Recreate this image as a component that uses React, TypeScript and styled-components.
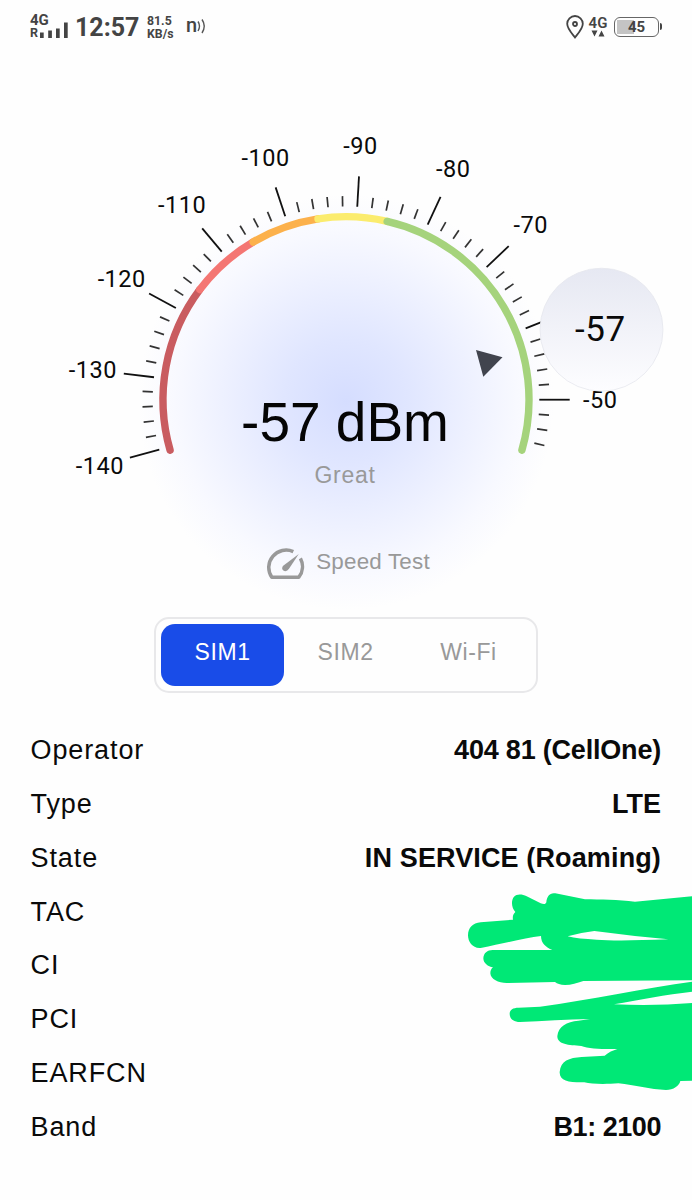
import React from "react";
import styled, { createGlobalStyle } from "styled-components";

const GlobalStyle = createGlobalStyle`
  *, *::before, *::after { box-sizing: border-box; }
  body {
    margin: 0;
    background: #fefefe;
    font-family: "Liberation Sans", Arial, sans-serif;
    color: #0a0a0a;
  }
`;

const Screen = styled.main`
  width: 692px;
  height: 1200px;
  display: flex;
  flex-direction: column;
  overflow: hidden;
  background: #fefefe;
`;

/* ---------- status bar ---------- */

const StatusBar = styled.header`
  height: 52px;
  flex: none;
  padding: 0 33px 0 30px;
  display: flex;
  justify-content: space-between;
  align-items: flex-start;
  font-family: Roboto, "Liberation Sans", sans-serif;
  color: #444;
`;

const StatusGroup = styled.div`
  display: flex;
  align-items: flex-start;
`;

const Network = styled.div`
  width: 40px;
  padding-top: 13px;
  font-size: 15px;
  font-weight: 700;
  line-height: 14px;
`;

const Roaming = styled.div`
  display: flex;
  align-items: flex-end;
  height: 12px;
  gap: 2px;
  font-size: 12.5px;
  line-height: 12px;
`;

const Bars = styled.svg`
  width: 30px;
  height: 17px;
  flex: none;
  margin-bottom: 1.5px;
`;

const Clock = styled.div`
  margin: 13px 0 0 5px;
  width: 64px;
  font-size: 25px;
  line-height: 30px;
  font-weight: 700;
  white-space: nowrap;
`;

const Rate = styled.div`
  margin: 15px 0 0 8px;
  width: 38px;
  font-size: 12.3px;
  font-weight: 700;
  line-height: 12.5px;
  white-space: nowrap;
`;

const Nfc = styled.div`
  display: flex;
  margin: 14px 0 0 1px;
  font-size: 20px;
  line-height: 22px;
  font-weight: 500;
`;

const DataIndicator = styled.div`
  margin: 16px 0 0 4px;
  width: 20px;
  display: flex;
  flex-direction: column;
  align-items: center;
  font-size: 15px;
  line-height: 14px;
  font-weight: 600;
`;

const Battery = styled.div`
  position: relative;
  margin: 17px 0 0 6px;
  width: 45px;
  height: 20px;
  border: 1.5px solid #666;
  border-radius: 6px;
  display: flex;
  align-items: center;
  justify-content: center;
  font-size: 15px;
  font-weight: 700;
  background: linear-gradient(90deg, #c4c4c4 0 17px, transparent 17px) 2px 2px / 40px 14px no-repeat;

  &::after {
    content: "";
    position: absolute;
    right: -4px;
    top: 5px;
    width: 2px;
    height: 7px;
    border-radius: 0 2px 2px 0;
    background: #444;
  }
`;

/* ---------- gauge ---------- */

const GaugeStage = styled.section`
  display: grid;
  height: 564.5px;
  flex: none;
`;

const Dial = styled.svg`
  grid-area: 1 / 1;
  width: 692px;
  height: 564px;
`;

const Readout = styled.div`
  grid-area: 1 / 1;
  z-index: 1;
  display: flex;
  flex-direction: column;
  align-items: center;
  padding-top: 339px;
`;

const Level = styled.div`
  font-size: 55px;
  line-height: 62px;
  color: #050505;
  white-space: nowrap;
  padding-right: 2px;
`;

const Quality = styled.div`
  margin-top: 9px;
  font-size: 23px;
  line-height: 26px;
  letter-spacing: 0.7px;
  color: #999;
  padding-right: 2px;
`;

const SpeedTest = styled.button`
  display: flex;
  align-items: center;
  gap: 11px;
  margin: 55px 0 0 4px;
  padding: 0;
  border: 0;
  background: none;
  font: 22.4px/28px "Liberation Sans", Arial, sans-serif;
  letter-spacing: 0.2px;
  color: #999;

  svg {
    margin-top: 5px;
  }
`;

/* ---------- tabs ---------- */

const Tabs = styled.nav`
  width: 384px;
  height: 76px;
  flex: none;
  align-self: center;
  display: flex;
  padding: 5px;
  border: 2px solid #e8e8ea;
  border-radius: 15px;
`;

const Tab = styled.button<{ $active?: boolean }>`
  width: 123px;
  height: 62px;
  flex: none;
  border: 0;
  border-radius: 14px;
  padding: 0 0 4px;
  background: ${(p) => (p.$active ? "#194ce8" : "transparent")};
  color: ${(p) => (p.$active ? "#fff" : "#999")};
  font: 23px "Liberation Sans", Arial, sans-serif;
  letter-spacing: 0.6px;
`;

/* ---------- details ---------- */

const Details = styled.section`
  position: relative;
  margin-top: 31px;
  padding: 0 31px 0 30.5px;
`;

const Row = styled.div`
  display: flex;
  justify-content: space-between;
  align-items: center;
  height: 53.86px;
`;

const Label = styled.span`
  font-size: 27px;
  letter-spacing: 0.9px;
`;

const Value = styled.span<{ $tracking: number }>`
  font-size: 27px;
  font-weight: 700;
  letter-spacing: ${(p) => p.$tracking}px;
`;

const Redaction = styled.svg`
  position: absolute;
  right: 0;
  top: 156.5px;
  width: 242px;
  height: 220px;
`;

const CX = 346;
const CY = 399.7;
const RADIUS = 183;

/* Angle 0 points left and grows clockwise over the top of the dial. */
const polar = (deg: number, r: number) => {
  const a = (deg * Math.PI) / 180;
  return { x: CX - Math.cos(a) * r, y: CY - Math.sin(a) * r };
};

const arcPath = (from: number, to: number) => {
  const a = polar(from, RADIUS);
  const b = polar(to, RADIUS);
  return `M${a.x} ${a.y}A${RADIUS} ${RADIUS} 0 0 1 ${b.x} ${b.y}`;
};

const segments = [
  { from: -16, to: 37, color: "#c95c60" },
  { from: 37, to: 59.5, color: "#f47673" },
  { from: 59.5, to: 81.2, color: "#fcb14c" },
  { from: 81.2, to: 103, color: "#fbec6e" },
  { from: 103, to: 196, color: "#a5d37c" },
];

const ticks = Array.from({ length: 49 }, (_, i) => ({
  angle: -15 + (i * 13) / 3,
  major: i % 5 === 0,
  label: String(-140 + i * 2),
}));

function Gauge() {
  return (
    <Dial viewBox="0 52 692 564">
      <defs>
        <radialGradient id="glow" gradientUnits="userSpaceOnUse" cx={CX} cy="402" r="208">
          <stop offset="0" stopColor="#d5ddff" />
          <stop offset="0.3" stopColor="#e0e6ff" />
          <stop offset="0.6" stopColor="#eef1ff" />
          <stop offset="0.82" stopColor="#f8f9ff" />
          <stop offset="1" stopColor="#fefefe" />
        </radialGradient>
        <linearGradient id="bubble" x1="0" y1="0" x2="0" y2="1">
          <stop offset="0" stopColor="#e6e8f2" />
          <stop offset="1" stopColor="#fdfdff" />
        </linearGradient>
      </defs>
      <circle cx={CX} cy="402" r="208" fill="url(#glow)" />
      {segments.map((s) => (
        <path
          key={s.from}
          d={arcPath(s.from, s.to)}
          fill="none"
          stroke={s.color}
          strokeWidth="7.4"
          strokeLinecap="round"
        />
      ))}
      {ticks.map((t) => {
        const a = polar(t.angle, 193.3);
        const b = polar(t.angle, t.major ? 223.7 : 203.6);
        const l = polar(t.angle, 254.5);
        return (
          <g key={t.label}>
            <line
              x1={a.x}
              y1={a.y}
              x2={b.x}
              y2={b.y}
              stroke={t.major ? "#111" : "#333"}
              strokeWidth={t.major ? 1.8 : 1.7}
            />
            {t.major && t.label !== "-60" && (
              <text
                x={l.x - 0.3}
                y={l.y + 8.2}
                textAnchor="middle"
                fontFamily="Roboto, sans-serif"
                fontSize="23.5"
                letterSpacing="0.5"
                fill="#0a0a0a"
              >
                {t.label}
              </text>
            )}
          </g>
        );
      })}
      <path d="M476 350L502.5 357.2L483.3 376.8Z" fill="#41444e" />
      <circle cx="601.5" cy="329.7" r="61.5" fill="url(#bubble)" stroke="#e6e7ee" strokeWidth="0.8" />
      <text
        x="600.5"
        y="341.3"
        textAnchor="middle"
        fontFamily="Roboto, sans-serif"
        fontSize="35"
        letterSpacing="0.6"
        fill="#0a0a0a"
      >
        -57
      </text>
    </Dial>
  );
}

const details = [
  { label: "Operator", value: "404 81 (CellOne)", tracking: -0.2 },
  { label: "Type", value: "LTE", tracking: 0 },
  { label: "State", value: "IN SERVICE (Roaming)", tracking: 0.13 },
  { label: "TAC" },
  { label: "CI" },
  { label: "PCI" },
  { label: "EARFCN" },
  { label: "Band", value: "B1: 2100", tracking: -0.45 },
];

export default function App() {
  return (
    <Screen>
      <GlobalStyle />
      <StatusBar>
        <StatusGroup>
          <Network>
            4G
            <Roaming>
              R
              <Bars viewBox="0 0 30 17" fill="#444">
                <rect x="0" y="11.5" width="3.7" height="5.5" />
                <rect x="8.2" y="9.5" width="3.7" height="7.5" />
                <rect x="16" y="7.5" width="3.7" height="9.5" />
                <rect x="24" y="1.5" width="3.7" height="15.5" />
              </Bars>
            </Roaming>
          </Network>
          <Clock>12:57</Clock>
          <Rate>
            81.5
            <br />
            KB/s
          </Rate>
          <Nfc>
            n
            <svg width="10" height="22" viewBox="0 0 10 22" fill="none" stroke="#555" strokeWidth="1.4">
              <path d="M1 7.500Q4 12 1 17M5 5.500Q9.500 12 5 19" />
            </svg>
          </Nfc>
        </StatusGroup>
        <StatusGroup>
          <svg width="18" height="42" viewBox="0 0 18 42" fill="none" stroke="#444" strokeWidth="1.8">
            <path d="M9 37.500C5 32.500 1.200 28.500 1.200 23.800A7.800 7.800 0 0 1 16.800 23.800C16.800 28.500 13 32.500 9 37.500Z" />
            <circle cx="9" cy="24" r="2" />
          </svg>
          <DataIndicator>
            4G
            <svg width="14" height="7" viewBox="0 0 14 7" fill="#444">
              <path d="M0.500 0.500H6.500L3.500 6.500ZM7.500 6.500H13.500L10.500 0.500Z" />
            </svg>
          </DataIndicator>
          <Battery>45</Battery>
        </StatusGroup>
      </StatusBar>

      <GaugeStage>
        <Gauge />
        <Readout>
          <Level>-57 dBm</Level>
          <Quality>Great</Quality>
          <SpeedTest>
            <svg
              width="39"
              height="32"
              viewBox="0 0 39 32"
              fill="none"
              stroke="#999"
              strokeWidth="3.5"
              strokeLinejoin="round"
            >
              <path d="M27.3 3.600A17.400 17.400 0 0 0 5.800 29.300H32.800A17.400 17.400 0 0 0 34.400 10.400" />
              <path d="M32.800 6L23 20.800Q20.500 24.300 17.400 22.600Q14.800 20.300 17.500 17.500Z" fill="#999" stroke="none" />
            </svg>
            Speed Test
          </SpeedTest>
        </Readout>
      </GaugeStage>

      <Tabs>
        <Tab $active>SIM1</Tab>
        <Tab>SIM2</Tab>
        <Tab>Wi-Fi</Tab>
      </Tabs>

      <Details>
        {details.map((d) => (
          <Row key={d.label}>
            <Label>{d.label}</Label>
            {d.value && <Value $tracking={d.tracking ?? 0}>{d.value}</Value>}
          </Row>
        ))}
        <Redaction viewBox="0 0 726 660" fill="#00e876">
          <path
            fillRule="evenodd"
            d="M92 204C68 206 54 186 54 166C54 144 68 129 92 127L189 119C187 110 190 101 196 96C185 84 182 62 192 50C200 42 216 42 230 49L272 70C280 73 287 74 289 67C290 49 300 37 316 40L405 58C450 58 505 60 555 65L726 49V301L400 303C380 309 365 315 345 315C330 315 322 311 315 306L170 309C145 309 122 298 121 280C121 272 124 266 129 262C114 260 100 250 100 235C101 219 112 210 128 210H307C288 202 273 190 273 168C225 174 160 190 92 204ZM353 169Q390 158 433 153Q545 168 655 178Q500 184 440 179Q385 177 353 169Z"
          />
          <path d="M210 426C190 426 179 416 179 402C179 389 189 383 206 383L270 380C420 359 590 324 726 305V335C650 344 565 359 492 373Q610 379 726 369V602L691 603C687 619 671 629 648 630C600 629 555 615 505 610C470 613 425 613 403 607C360 608 328 603 329 576C332 543 357 533 395 531L464 527C475 517 489 511 502 507C460 508 415 506 394 498C355 496 321 493 322 468C325 439 350 425 385 422L420 417C350 418 280 423 210 426Z" />
        </Redaction>
      </Details>
    </Screen>
  );
}
